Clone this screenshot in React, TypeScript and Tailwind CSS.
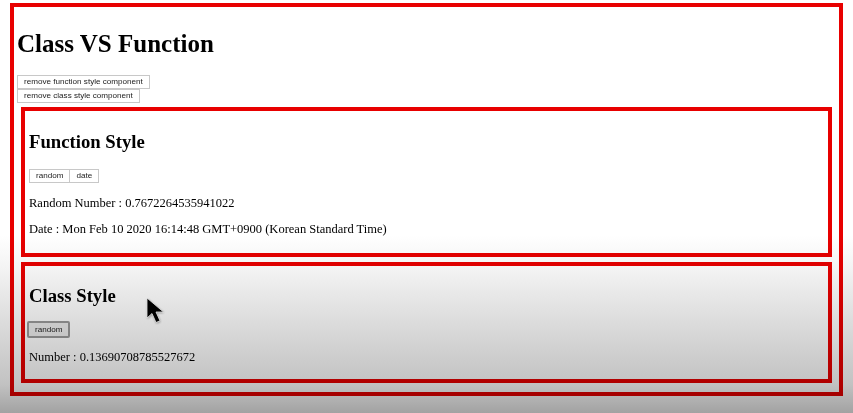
import React from "react";

const serif = "font-['Liberation_Serif','Times_New_Roman',serif]";
const sans = "font-['Liberation_Sans',Arial,sans-serif]";

const btn =
  "bg-white border border-[#c8c8c8] px-[6px] py-px text-[8.1px] leading-[10px] text-[#222] " +
  sans;

const FunctionStyle = () => (
  <div className="ml-[4px] w-[811px] h-[150px] border-4 border-[#e80000] px-[4px]">
    <h2 className={`${serif} mt-[20px] text-[18.7px] font-bold leading-[21px] text-black`}>
      Function Style
    </h2>
    <div className="mt-[17px] flex">
      <button className={btn}>random</button>
      <button className={`${btn} -ml-px`}>date</button>
    </div>
    <p className={`${serif} mt-[13px] text-[12.5px] leading-[14px] text-black`}>
      Random Number : 0.7672264535941022
    </p>
    <p className={`${serif} mt-[12px] text-[12.5px] leading-[14px] text-black`}>
      Date : Mon Feb 10 2020 16:14:48 GMT+0900 (Korean Standard Time)
    </p>
  </div>
);

const ClassStyle = () => (
  <div className="mt-[5px] ml-[4px] w-[811px] h-[121px] border-4 border-[#e80000] px-[4px]">
    <h2 className={`${serif} mt-[19px] text-[18.7px] font-bold leading-[21px] text-black`}>
      Class Style
    </h2>
    <div className="mt-[15px] flex">
      <button
        className={`-ml-[2px] bg-[#ececec] border-2 border-[#9a9a9a] rounded-[2px] px-[6px] py-[1.5px] text-[8.1px] leading-[10px] text-[#222] ${sans}`}
      >
        random
      </button>
    </div>
    <p className={`${serif} mt-[12px] text-[12.5px] leading-[14px] text-black`}>
      Number : 0.13690708785527672
    </p>
  </div>
);

export default function App() {
  return (
    <div className="relative w-[853px] h-[413px] overflow-hidden bg-white">
      <div className="ml-[10px] mt-[3px] w-[833px] h-[393px] border-4 border-[#e80000] pl-[3px]">
        <h1 className={`${serif} mt-[23px] text-[25px] font-bold leading-[28px] text-black`}>
          Class VS Function
        </h1>
        <div className="mt-[17px] flex flex-col items-start">
          <button className={btn}>remove function style component</button>
          <button className={btn}>remove class style component</button>
        </div>
        <div className="mt-[4px]">
          <FunctionStyle />
          <ClassStyle />
        </div>
      </div>

      {/* video shading */}
      <div className="pointer-events-none absolute inset-0 mix-blend-multiply bg-[linear-gradient(to_bottom,#ffffff_0%,#ffffff_57%,#f5f5f5_64%,#dcdcdc_78%,#c2c2c2_93%,#a2a2a2_100%)]" />

      {/* mouse cursor */}
      <svg
        className="pointer-events-none absolute left-[143px] top-[295px]"
        width="26"
        height="32"
        viewBox="0 0 26 32"
      >
        <defs>
          <filter id="sh" x="-50%" y="-50%" width="200%" height="200%">
            <feGaussianBlur stdDeviation="1.3" />
          </filter>
        </defs>
        <path
          d="M4 3 L4 23 L9 18.5 L13 27.5 L17 25.8 L13 17 L20.5 17 Z"
          fill="#000"
          opacity="0.4"
          filter="url(#sh)"
          transform="translate(0.5 1)"
        />
        <path
          d="M4 3 L4 23 L9 18.5 L13 27.5 L17 25.8 L13 17 L20.5 17 Z"
          fill="#000"
          stroke="#e8e8e8"
          strokeWidth="0.8"
          strokeLinejoin="round"
        />
      </svg>
    </div>
  );
}
